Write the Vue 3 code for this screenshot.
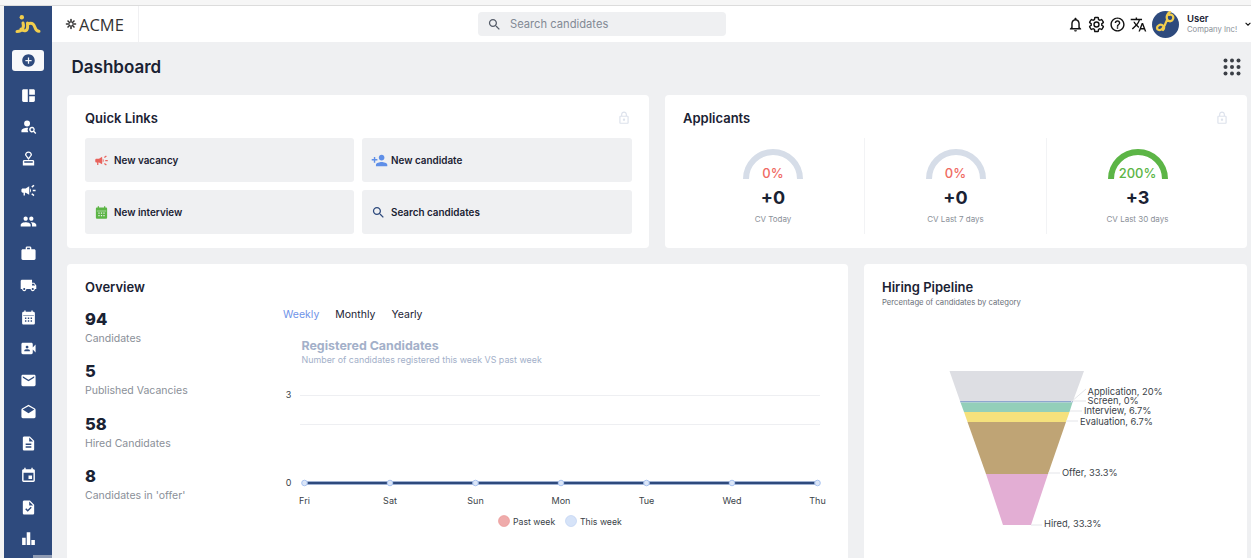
<script setup>
const P = {
  mosaic: 'M3 5v14c0 1.1.89 2 2 2h6V3H5c-1.11 0-2 .9-2 2zm16-2h-6v8h8V5c0-1.1-.9-2-2-2zm-6 18h6c1.1 0 2-.9 2-2v-6h-8v8z',
  personSearch: 'M10 12a4.2 4.2 0 1 0 0-8.400a4.200 4.200 0 0 0 0 8.400zM2 20v-2c0-2.700 5-4.200 8-4.200 .5 0 1 .03 1.500 .1A6 6 0 0 0 11.700 20H2zM20.300 18.400a4 4 0 1 0-1.400 1.400L21.600 22.500 23 21.100l-2.700-2.700zM17 18.500a2 2 0 1 1 0-4 2 2 0 0 1 0 4z',
  approval: 'M4 16v6h16v-6c0-1.100-.9-2-2-2H6c-1.100 0-2 .9-2 2zm14 2H6v-2h12v2zM12 2C9.240 2 7 4.240 7 7l5 7 5-7c0-2.760-2.240-5-5-5zm0 9L9 7c0-1.660 1.340-3 3-3s3 1.340 3 3l-3 4z',
  campaign: 'M18 11v2h4v-2h-4zm-2 6.610c.96.71 2.210 1.650 3.200 2.390.4-.53.8-1.070 1.200-1.600-.99-.74-2.240-1.680-3.200-2.400-.4.54-.8 1.080-1.200 1.610zM20.400 5.600c-.4-.53-.8-1.070-1.200-1.600-.99.74-2.240 1.680-3.200 2.400.4.53.8 1.070 1.200 1.600.96-.72 2.210-1.650 3.200-2.400zM4 9c-1.100 0-2 .9-2 2v2c0 1.100.9 2 2 2h1v4h2v-4h1l5 3V6L8 9H4zm11.500 3c0-1.330-.58-2.530-1.500-3.350v6.690c.92-.81 1.500-2.010 1.500-3.340z',
  people: 'M16 11c1.660 0 2.990-1.340 2.990-3S17.660 5 16 5c-1.660 0-3 1.340-3 3s1.340 3 3 3zm-8 0c1.660 0 2.990-1.340 2.990-3S9.660 5 8 5C6.340 5 5 6.340 5 8s1.340 3 3 3zm0 2c-2.330 0-7 1.170-7 3.500V19h14v-2.500c0-2.330-4.670-3.500-7-3.500zm8 0c-.29 0-.62.02-.97.05 1.160.84 1.970 1.970 1.970 3.450V19h6v-2.500c0-2.330-4.670-3.500-7-3.500z',
  work: 'M20 6h-4V4c0-1.110-.89-2-2-2h-4c-1.110 0-2 .89-2 2v2H4c-1.110 0-1.990.89-1.990 2L2 19c0 1.110.89 2 2 2h16c1.110 0 2-.89 2-2V8c0-1.110-.89-2-2-2zm-6 0h-4V4h4v2z',
  truck: 'M20 8h-3V4H3c-1.100 0-2 .9-2 2v11h2c0 1.660 1.340 3 3 3s3-1.340 3-3h6c0 1.660 1.340 3 3 3s3-1.340 3-3h2v-5l-3-4zM6 18.500c-.83 0-1.500-.67-1.500-1.500s.67-1.500 1.500-1.500 1.500.67 1.500 1.500-.67 1.500-1.500 1.500zm13.500-9l1.960 2.500H17V9.500h2.500zm-1.500 9c-.83 0-1.500-.67-1.500-1.500s.67-1.500 1.500-1.500 1.500.67 1.500 1.500-.67 1.500-1.500 1.500z',
  calendar: 'M19 4h-1V2h-2v2H8V2H6v2H5C3.890 4 3 4.900 3 6v14c0 1.100.89 2 2 2h14c1.100 0 2-.9 2-2V6c0-1.100-.9-2-2-2zM4.500 9h15v1h-15zM7 12h2v2H7zM11 12h2v2h-2zM15 12h2v2h-2zM7 16h2v2H7zM11 16h2v2h-2zM15 16h2v2h-2z',
  video: 'M18 10.480V6c0-1.100-.9-2-2-2H4c-1.100 0-2 .9-2 2v12c0 1.100.9 2 2 2h12c1.100 0 2-.9 2-2v-4.480l4 3.980v-11l-4 3.980zM10 8c1.100 0 2 .9 2 2s-.9 2-2 2-2-.9-2-2 .9-2 2-2zm4 8H6v-.57c0-.81.48-1.530 1.220-1.850a6.950 6.950 0 0 1 5.560 0A2.010 2.010 0 0 1 14 15.430V16z',
  mail: 'M20 4H4c-1.100 0-1.990.9-1.990 2L2 18c0 1.100.9 2 2 2h16c1.100 0 2-.9 2-2V6c0-1.100-.9-2-2-2zm0 4l-8 5-8-5V6l8 5 8-5v2z',
  drafts: 'M21.990 8c0-.72-.37-1.350-.94-1.700L12 1 2.950 6.300C2.380 6.650 2 7.280 2 8v10c0 1.100.9 2 2 2h16c1.100 0 2-.9 2-2l-.01-10zM12 13L3.740 7.840 12 3l8.260 4.840L12 13z',
  doc: 'M14 2H6c-1.100 0-1.990.9-1.990 2L4 20c0 1.100.89 2 1.990 2H18c1.100 0 2-.9 2-2V8l-6-6zm2 16H8v-2h8v2zm0-4H8v-2h8v2zm-3-5V3.500L18.500 9H13z',
  event: 'M17 12h-5v5h5v-5zM16 1v2H8V1H6v2H5c-1.110 0-1.990.9-1.990 2L3 19c0 1.100.89 2 2 2h14c1.100 0 2-.9 2-2V5c0-1.100-.9-2-2-2h-1V1h-2zm3 18H5V8h14v11z',
  task: 'M14 2H6c-1.100 0-1.990.9-1.990 2L4 20c0 1.100.89 2 1.990 2H18c1.100 0 2-.9 2-2V8l-6-6zm-3.060 16L7.400 14.460l1.410-1.410 2.120 2.120 4.240-4.240 1.410 1.410L10.940 18zM13 9V3.500L18.500 9H13z',
  bars: 'M3 11h5v10H3zM9.500 3h5v18h-5zM16 14h5v7h-5z',
  bell: 'M12 22c1.100 0 2-.9 2-2h-4c0 1.100.9 2 2 2zm6-6v-5c0-3.070-1.630-5.640-4.500-6.320V4c0-.83-.67-1.500-1.500-1.500s-1.500.67-1.500 1.500v.68C7.640 5.360 6 7.920 6 11v5l-2 2v1h16v-1l-2-2zm-2 1H8v-6c0-2.480 1.510-4.500 4-4.500s4 2.020 4 4.500v6z',
  gear: 'M19.430 12.980c.04-.32.07-.64.07-.98s-.03-.66-.07-.98l2.110-1.650c.19-.15.24-.42.12-.64l-2-3.460c-.12-.22-.39-.3-.61-.22l-2.490 1c-.52-.4-1.080-.73-1.690-.98l-.38-2.650C14.460 2.180 14.250 2 14 2h-4c-.25 0-.46.18-.49.42l-.38 2.650c-.61.25-1.170.59-1.690.98l-2.490-1c-.23-.09-.49 0-.61.22l-2 3.460c-.13.22-.07.49.12.64l2.110 1.650c-.04.32-.07.65-.07.98s.03.66.07.98l-2.110 1.650c-.19.15-.24.42-.12.64l2 3.460c.12.22.39.3.61.22l2.490-1c.52.4 1.080.73 1.690.98l.38 2.650c.03.24.24.42.49.42h4c.25 0 .46-.18.49-.42l.38-2.650c.61-.25 1.170-.59 1.690-.98l2.490 1c.23.09.49 0 .61-.22l2-3.460c.12-.22.07-.49-.12-.64l-2.110-1.650zM12 15.500c-1.930 0-3.500-1.570-3.500-3.500s1.570-3.500 3.500-3.500 3.500 1.570 3.500 3.500-1.570 3.500-3.500 3.500z',
  help: 'M11 18h2v-2h-2v2zm1-16C6.480 2 2 6.480 2 12s4.480 10 10 10 10-4.480 10-10S17.520 2 12 2zm0 18c-4.410 0-8-3.590-8-8s3.590-8 8-8 8 3.590 8 8-3.590 8-8 8zm0-14c-2.210 0-4 1.790-4 4h2c0-1.100.9-2 2-2s2 .9 2 2c0 2-3 1.750-3 5h2c0-2.250 3-2.500 3-5 0-2.210-1.790-4-4-4z',
  translate: 'M12.870 15.070l-2.540-2.510.03-.03c1.740-1.940 2.980-4.170 3.710-6.530H17V4h-7V2H8v2H1v1.990h11.170C11.500 7.920 10.440 9.750 9 11.350 8.070 10.320 7.300 9.190 6.690 8h-2c.73 1.630 1.730 3.170 2.980 4.560l-5.090 5.020L4 19l5-5 3.110 3.110.76-2.040zM18.500 10h-2L12 22h2l1.120-3h4.750L21 22h2l-4.500-12zm-2.620 7l1.620-4.330L19.120 17h-3.240z',
  search: 'M15.500 14h-.79l-.28-.27C15.410 12.590 16 11.110 16 9.500 16 5.910 13.090 3 9.500 3S3 5.910 3 9.500 5.910 16 9.500 16c1.610 0 3.090-.59 4.230-1.570l.27.28v.79l5 4.990L20.490 19l-4.990-5zm-6 0C7.010 14 5 11.990 5 9.500S7.010 5 9.500 5 14 7.010 14 9.500 11.990 14 9.500 14z',
  personAdd: 'M15 12c2.210 0 4-1.790 4-4s-1.790-4-4-4-4 1.790-4 4 1.790 4 4 4zm-9-2V7H4v3H1v2h3v3h2v-3h3v-2H6zm9 4c-2.670 0-8 1.340-8 4v2h16v-2c0-2.660-5.330-4-8-4z',
  lock: 'M18 8h-1V6c0-2.760-2.240-5-5-5S7 3.240 7 6v2H6c-1.100 0-2 .9-2 2v10c0 1.100.9 2 2 2h12c1.100 0 2-.9 2-2V10c0-1.100-.9-2-2-2zM9 6c0-1.660 1.340-3 3-3s3 1.340 3 3v2H9V6zm9 14H6V10h12v10zm-6-3c1.100 0 2-.9 2-2s-.9-2-2-2-2 .9-2 2 .9 2 2 2z',
  add: 'M12 2C6.480 2 2 6.480 2 12s4.480 10 10 10 10-4.480 10-10S17.520 2 12 2zm5 11h-4v4h-2v-4H7v-2h4V7h2v4h4v2z'
}

const navIcons = ['mosaic', 'personSearch', 'approval', 'campaign', 'people', 'work', 'truck', 'calendar', 'video', 'mail', 'drafts', 'doc', 'event', 'task', 'bars']

const links = [
  { label: 'New vacancy', icon: 'campaign', cls: 'red' },
  { label: 'New candidate', icon: 'personAdd', cls: 'blue' },
  { label: 'New interview', icon: 'calendar', cls: 'green' },
  { label: 'Search candidates', icon: 'search', cls: 'navy' }
]

const gauges = [
  { pct: '0%', val: '+0', label: 'CV Today', on: false },
  { pct: '0%', val: '+0', label: 'CV Last 7 days', on: false },
  { pct: '200%', val: '+3', label: 'CV Last 30 days', on: true }
]

const stats = [
  { n: '94', t: 'Candidates' },
  { n: '5', t: 'Published Vacancies' },
  { n: '58', t: 'Hired Candidates' },
  { n: '8', t: "Candidates in 'offer'" }
]

const days = ['Fri', 'Sat', 'Sun', 'Mon', 'Tue', 'Wed', 'Thu'].map((d, i) => ({ d, x: 304.500 + i * 85.500 }))

const funnel = [
  { pts: '949.500,371 1084,371 1073,401 960,401', fill: '#dddee3' },
  { pts: '960,401 1073,401 1072.500,402.500 960.500,402.500', fill: '#8ea6cf' },
  { pts: '960.500,402.500 1072.500,402.500 1069.500,412 964,412', fill: '#93cfb9' },
  { pts: '964,412 1069.500,412 1066,422 967.500,422', fill: '#f5e17c' },
  { pts: '967.500,422 1066,422 1048,474 986,474', fill: '#bfa475' },
  { pts: '986,474 1048,474 1031,525 1003,525', fill: '#e3aed4' }
]

const labels = [
  { t: 'Application, 20%', x: 1087.500, y: 395, line: '1071,402 1086,389' },
  { t: 'Screen, 0%', x: 1087.500, y: 404, line: '1073,401 1086,401' },
  { t: 'Interview, 6.7%', x: 1084, y: 414, line: '1070,411 1082,411' },
  { t: 'Evaluation, 6.7%', x: 1080, y: 424.500, line: '1066,421 1078,421' },
  { t: 'Offer, 33.3%', x: 1062, y: 476, line: '1048,473 1060,473' },
  { t: 'Hired, 33.3%', x: 1044, y: 527, line: '1031,525 1042,525' }
]
</script>

<template>
  <div class="app">
    <aside class="side">
      <svg class="logo" viewBox="0 0 26 18" width="26" height="18">
        <circle cx="6.800" cy="2.200" r="2.200" fill="#f2ce4d" />
        <path d="M8 8c1.500 5-1 8.500-6 8.500M6 14c3 3 6 2 6.500-1 .3-2 0-3.500 0-5M14 8.500c4-1 5 1 6 4 .8 2.500 1.800 3.800 4 3.800" fill="none" stroke="#f2ce4d" stroke-width="3" stroke-linecap="round" />
      </svg>
      <div class="add-btn">
        <svg viewBox="0 0 24 24" width="15" height="15"><path :d="P.add" fill="#2e4a7d" /></svg>
      </div>
      <svg v-for="n in navIcons" :key="n" class="nav-icon" viewBox="0 0 24 24" width="17" height="17">
        <path :d="P[n]" fill="#fff" fill-rule="evenodd" />
      </svg>
      <div class="side-thumb"></div>
    </aside>

    <div class="content">
      <header class="top">
        <div class="brand">
          <svg viewBox="0 0 24 24" width="12" height="12">
            <g stroke="#333" stroke-width="3.200" stroke-linecap="round">
              <path d="M12 3v5M12 16v5M3 12h5M16 12h5M6 6l3 3M15 15l3 3M18 6l-3 3M9 15l-3 3" />
            </g>
          </svg>
          <span>ACME</span>
        </div>
        <div class="search">
          <svg viewBox="0 0 24 24" width="15" height="15"><path :d="P.search" fill="#555c68" /></svg>
          <span>Search candidates</span>
        </div>
        <div class="actions">
          <svg viewBox="0 0 24 24" width="17" height="17"><path :d="P.bell" fill="#111" /></svg>
          <svg viewBox="0 0 24 24" width="17" height="17"><path :d="P.gear" fill="none" stroke="#111" stroke-width="2" /></svg>
          <svg viewBox="0 0 24 24" width="17" height="17"><path :d="P.help" fill="#111" /></svg>
          <svg viewBox="0 0 24 24" width="17" height="17"><path :d="P.translate" fill="#111" /></svg>
          <svg class="avatar" viewBox="0 0 27 27" width="27" height="27">
            <circle cx="13.500" cy="13.500" r="13.500" fill="#2e4a7d" />
            <path d="M17 4c3-1 5 1 4 4s-5 3-6 0 1-6 3-7M15 9c-1 3-2 6-5 9M10 18c-2 2-5 1-5-1s3-4 5-3 3 3 1 5" fill="none" stroke="#f2ce4d" stroke-width="2.300" stroke-linecap="round" />
          </svg>
          <div class="user">
            <div class="user-name">User</div>
            <div class="user-co">Company Inc!</div>
          </div>
          <svg class="caret" viewBox="0 0 10 6" width="6" height="4"><path d="M1 1l4 4 4-4" fill="none" stroke="#111" stroke-width="1.800" /></svg>
        </div>
      </header>

      <main class="main">
        <div class="title-row">
          <h1>Dashboard</h1>
          <svg viewBox="0 0 18 18" width="18" height="18" fill="#3b3f46">
            <circle cx="2.500" cy="2.500" r="2" /><circle cx="9" cy="2.500" r="2" /><circle cx="15.500" cy="2.500" r="2" />
            <circle cx="2.500" cy="9" r="2" /><circle cx="9" cy="9" r="2" /><circle cx="15.500" cy="9" r="2" />
            <circle cx="2.500" cy="15.500" r="2" /><circle cx="9" cy="15.500" r="2" /><circle cx="15.500" cy="15.500" r="2" />
          </svg>
        </div>

        <div class="row-one">
          <section class="card small-card">
            <div class="card-head">
              <h2>Quick Links</h2>
              <svg viewBox="0 0 24 24" width="14" height="14"><path :d="P.lock" fill="#dde2ec" /></svg>
            </div>
            <div class="links">
              <div v-for="l in links" :key="l.label" class="link">
                <span class="link-icon">
                  <svg viewBox="0 0 24 24" :class="l.cls" :width="l.icon === 'personAdd' ? 17 : 15" :height="l.icon === 'personAdd' ? 17 : 15">
                    <path :d="P[l.icon]" fill="currentColor" fill-rule="evenodd" />
                  </svg>
                </span>
                <span>{{ l.label }}</span>
              </div>
            </div>
          </section>

          <section class="card small-card">
            <div class="card-head">
              <h2>Applicants</h2>
              <svg viewBox="0 0 24 24" width="14" height="14"><path :d="P.lock" fill="#dde2ec" /></svg>
            </div>
            <div class="gauges">
              <div v-for="g in gauges" :key="g.label" class="gauge">
                <div class="arc-wrap">
                  <svg viewBox="0 0 60 30" width="60" height="30">
                    <path d="M3 30a27 27 0 0 1 54 0" fill="none" :stroke="g.on ? '#5cb546' : '#d6dde8'" stroke-width="6" />
                  </svg>
                  <span class="pct" :class="{ good: g.on }">{{ g.pct }}</span>
                </div>
                <div class="gauge-val">{{ g.val }}</div>
                <div class="gauge-label">{{ g.label }}</div>
              </div>
            </div>
          </section>
        </div>

        <div class="row-two">
          <section class="card overview">
            <div class="stats">
              <h2>Overview</h2>
              <div v-for="s in stats" :key="s.t" class="stat">
                <div class="stat-n">{{ s.n }}</div>
                <div class="stat-t">{{ s.t }}</div>
              </div>
            </div>
            <div class="chart-col">
              <div class="tabs">
                <span class="tab active">Weekly</span>
                <span class="tab">Monthly</span>
                <span class="tab">Yearly</span>
              </div>
              <svg class="line-chart" viewBox="283 330 545 200" width="545" height="200">
                <text x="301.500" y="350" class="c-title">Registered Candidates</text>
                <text x="301.500" y="362.500" class="c-sub">Number of candidates registered this week VS past week</text>
                <line x1="300" x2="820" y1="395.500" y2="395.500" stroke="#eeeff2" />
                <line x1="300" x2="820" y1="424.500" y2="424.500" stroke="#eeeff2" />
                <text x="288.500" y="398" class="c-axis" text-anchor="middle">3</text>
                <text x="288.500" y="486" class="c-axis" text-anchor="middle">0</text>
                <line x1="304.500" x2="817" y1="483" y2="483" stroke="#c6d4ee" stroke-width="4" />
                <line x1="304.500" x2="817" y1="483" y2="483" stroke="#2e4a7d" stroke-width="2.400" />
                <circle v-for="p in days" :key="p.d" :cx="p.x" cy="483" r="2.800" fill="#dbe6f8" stroke="#a9c3f0" stroke-width="1" />
                <text v-for="p in days" :key="p.d + 't'" :x="p.x" y="503.500" class="c-axis" text-anchor="middle">{{ p.d }}</text>
                <circle cx="504" cy="521" r="5.500" fill="#efabab" stroke="#e9918f" stroke-width=".6" />
                <text x="513" y="524.500" class="c-legend">Past week</text>
                <circle cx="571" cy="521" r="5.500" fill="#d6e3f8" stroke="#b9cdf0" stroke-width=".6" />
                <text x="580" y="524.500" class="c-legend">This week</text>
              </svg>
            </div>
          </section>

          <section class="card hiring">
            <h2>Hiring Pipeline</h2>
            <p>Percentage of candidates by category</p>
            <svg class="funnel" viewBox="930 360 250 175" width="250" height="175">
              <polygon v-for="f in funnel" :key="f.pts" :points="f.pts" :fill="f.fill" />
              <template v-for="l in labels" :key="l.t">
                <polyline :points="l.line" fill="none" stroke="#e4e5e9" stroke-width="1" />
                <text :x="l.x" :y="l.y" class="f-label">{{ l.t }}</text>
              </template>
            </svg>
          </section>
        </div>
      </main>
    </div>
  </div>
</template>

<style>
html, body { margin: 0; overflow: hidden; }
</style>

<style scoped>
.app {
  width: 1251px;
  height: 558px;
  box-sizing: border-box;
  display: flex;
  overflow: hidden;
  padding: 6px 0 0 4px;
  background: linear-gradient(#f6f6f6 5px, #dcdcdc 5px, #dcdcdc 6px, #f4f4f4 6px);
  font-family: Inter, "Liberation Sans", sans-serif;
  color: #1a2233;
}
.side {
  width: 48px;
  flex: none;
  background: #2e4a7d;
  display: flex;
  flex-direction: column;
  align-items: center;
  position: relative;
}
.logo { margin-top: 9px; flex: none; }
.add-btn {
  width: 32px;
  height: 21px;
  margin: 17px 0 1px;
  flex: none;
  background: #f7f8fa;
  border-radius: 3px;
  display: flex;
  align-items: center;
  justify-content: center;
}
.nav-icon { flex: none; margin-top: 14.700px; }
.side-thumb {
  position: absolute;
  right: 0;
  bottom: 0;
  width: 19px;
  height: 3px;
  background: #8f9bb3;
}
.content {
  flex: 1;
  min-width: 0;
  display: flex;
  flex-direction: column;
  background: #eff0f2;
}
.top {
  height: 36px;
  flex: none;
  background: #fff;
  display: flex;
  align-items: center;
}
.brand {
  width: 87px;
  height: 100%;
  box-sizing: border-box;
  border-right: 1px solid #f0f0f2;
  display: flex;
  align-items: center;
  gap: 2px;
  padding-left: 13px;
  font-size: 16.500px;
  color: #333;
  font-family: "Open Sans", sans-serif;
}
.search {
  width: 248px;
  height: 24px;
  margin-left: 339px;
  background: #eff0f2;
  border-radius: 4px;
  display: flex;
  align-items: center;
  gap: 8px;
  padding-left: 9px;
  box-sizing: border-box;
  font-size: 11.200px;
  color: #838a95;
}
.actions {
  margin-left: auto;
  display: flex;
  align-items: center;
  gap: 4px;
}
.avatar { margin-left: 1px; }
.user { width: 54px; margin-left: 4px; }
.user-name { font-size: 9.500px; font-weight: 600; line-height: 12px; }
.user-co { font-size: 7.700px; color: #8a8f98; line-height: 10px; }
.main {
  flex: 1;
  min-height: 0;
  padding: 0 4px 0 15px;
  display: flex;
  flex-direction: column;
}
.title-row {
  height: 53px;
  flex: none;
  display: flex;
  align-items: center;
  justify-content: space-between;
  padding: 0 6px 3px 4.500px;
  box-sizing: border-box;
}
h1 { margin: 0; font-size: 17px; font-weight: 600; color: #1a2233; }
h2 { margin: 0; font-size: 13px; font-weight: 600; color: #1a2233; }
.card { background: #fff; border-radius: 4px; box-sizing: border-box; }
.row-one {
  display: grid;
  grid-template-columns: 582px 582px;
  gap: 16px;
  flex: none;
}
.small-card { height: 153px; padding: 14px 17px 14px 18px; }
.card-head {
  height: 29px;
  padding-right: 1px;
  box-sizing: border-box;
  display: flex;
  align-items: flex-start;
  justify-content: space-between;
}
.card-head h2 { line-height: 18px; }
.card-head svg { margin-top: 2px; }
.links {
  display: grid;
  grid-template-columns: 269px 270px;
  grid-auto-rows: 44px;
  gap: 8px;
  justify-content: space-between;
}
.link {
  background: #eff0f2;
  border-radius: 3px;
  display: flex;
  align-items: center;
  font-size: 9.900px;
  font-weight: 600;
  padding-left: 9px;
}
.link-icon { width: 20px; display: flex; align-items: center; }
.red { color: #e8625c; }
.blue { color: #5f8fe8; }
.green { color: #5cb546; }
.navy { color: #2e4a7d; }
.gauges { display: grid; grid-template-columns: repeat(3, 182px); height: 96px; margin-left: -1px; }
.gauge {
  padding-top: 11px;
  display: flex;
  flex-direction: column;
  align-items: center;
}
.gauge + .gauge { border-left: 1px solid #f2f3f5; }
.arc-wrap { position: relative; width: 60px; height: 30px; }
.arc-wrap svg { display: block; }
.pct {
  position: absolute;
  left: 0;
  right: 0;
  bottom: -2px;
  text-align: center;
  font-size: 13px;
  font-weight: 500;
  line-height: 16px;
  color: #ef6a63;
}
.pct.good { color: #5cb546; }
.gauge-val { font-size: 18px; font-weight: 700; line-height: 22px; margin-top: 8px; }
.gauge-label { font-size: 8px; color: #8a8f98; line-height: 10px; margin-top: 5px; }
.row-two {
  display: grid;
  grid-template-columns: 781px 383px;
  gap: 16px;
  margin-top: 16px;
  flex: 1;
  min-height: 320px;
}
.overview { display: flex; padding: 14px 18px 0; }
.stats { width: 198px; flex: none; }
.stats h2 { line-height: 18px; margin-bottom: 11px; }
.stat { height: 52.400px; }
.stat-n { font-size: 16.500px; font-weight: 800; line-height: 20px; padding-top: 2px; }
.stat-t { font-size: 10.500px; color: #8a8f98; line-height: 14px; margin-top: 3px; }
.chart-col { flex: none; width: 545px; }
.tabs { display: flex; gap: 16px; font-size: 10.500px; height: 16px; margin-top: 29px; line-height: 16px; }
.tab.active { color: #6f93e8; }
.line-chart { display: block; margin-top: 7px; overflow: visible; }
.c-title { font: 700 12.400px Inter, sans-serif; fill: #a3b0c9; }
.c-sub { font: 400 8.900px Inter, sans-serif; fill: #a3b0c9; }
.c-axis { font: 400 9px Inter, sans-serif; fill: #3a3f48; }
.c-legend { font: 400 8.700px Inter, sans-serif; fill: #3a3f48; }
.hiring { padding: 14px 18px 0; }
.hiring h2 { line-height: 18px; }
.hiring p { margin: 2px 0 0; font-size: 7.700px; color: #6b7079; line-height: 10px; }
.funnel { display: block; margin: 52px 0 0 48px; overflow: visible; }
.f-label { font: 400 9.300px Inter, sans-serif; fill: #3a3f48; }
</style>
